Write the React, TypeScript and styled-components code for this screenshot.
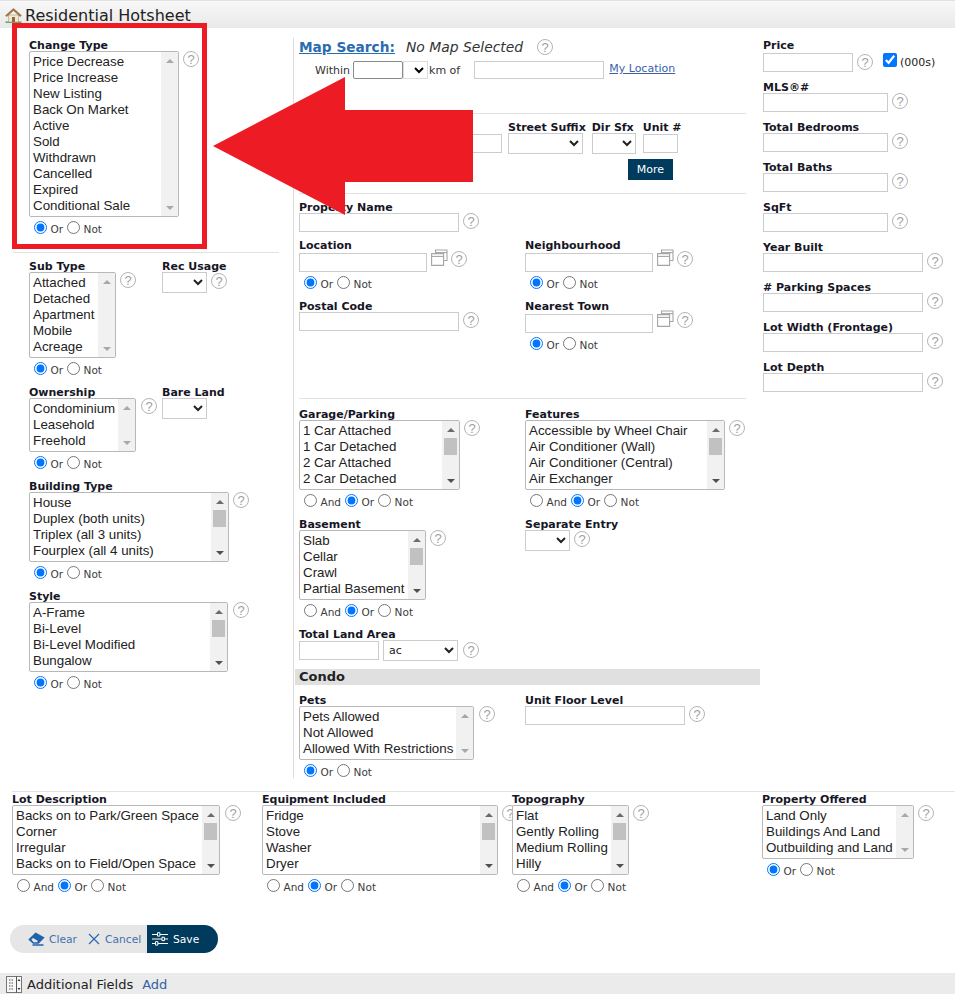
import React, { useId } from 'react';
import styled, { createGlobalStyle } from 'styled-components';

const GlobalStyle = createGlobalStyle`
  html, body {
    margin: 0;
    padding: 0;
    background: #fff;
  }
`;

const QUESTION = '?';

const HelpIcon = ({ top = 0, left = 4 }: { top?: number; left?: number }) => (
  <Help $top={top} $left={left}>{QUESTION}</Help>
);

const HouseIcon = () => (
  <svg width="17" height="15" viewBox="0 0 17 15">
    <path d="M0.5 14.2h16" stroke="#6ea35c" strokeWidth="1.6" />
    <path d="M3.5 7h10v7h-10z" fill="#f1e8d2" stroke="#a89a78" strokeWidth="0.6" />
    <path d="M7 9h3v5H7z" fill="#8c6a45" />
    <path d="M0.6 7.6 8.5 0.4l7.9 7.2-1.2 0.9-6.7-5.9L1.8 8.5z" fill="#a8743f" stroke="#7c5227" strokeWidth="0.5" />
  </svg>
);

const StackIcon = () => (
  <StackWrap>
    <svg width="17" height="17" viewBox="0 0 17 17" fill="#fff" stroke="#a5a5a5" strokeWidth="1.1">
      <path d="M4.5 1h11.5v10.5h-11.5z" />
      <path d="M4.5 3.6h11.5" />
      <path d="M0.6 4.6h12v11.8h-12z" />
      <path d="M0.6 7.4h12" />
    </svg>
  </StackWrap>
);

const EraserIcon = () => (
  <svg width="17" height="14" viewBox="0 0 17 14">
    <path d="M0.3 7.4 7.6 0.4l9 5-6 6.4H5z" fill="#1f63ad" />
    <path d="M3.4 7.4 5 6l5 3-1 1.3H5.6z" fill="#e6e6e6" />
    <path d="M4.5 13h11" stroke="#1f63ad" strokeWidth="1.5" />
  </svg>
);

const CrossIcon = () => (
  <svg width="12" height="12" viewBox="0 0 12 12" stroke="#2a69b0" strokeWidth="1.2">
    <path d="M1 1l10 10M11 1 1 11" />
  </svg>
);

const SlidersIcon = () => (
  <svg width="16" height="14" viewBox="0 0 16 14" fill="#003a5c" stroke="#fff" strokeWidth="1">
    <path d="M0 2.5h16M0 7h16M0 11.5h16" />
    <path d="M5.5 0.7h2.4v3.4H5.5zM10 5.2h2.4v3.4H10zM3.5 9.7h2.4v3.4H3.5z" />
  </svg>
);

const FieldsIcon = () => (
  <svg width="16" height="17" viewBox="0 0 16 17" fill="none" stroke="#555" strokeWidth="1">
    <rect x="0.5" y="0.5" width="15" height="16" fill="#f7f7f7" stroke="#777" />
    <path d="M3 4h5M3 7h5M3 10h5M3 13h5" strokeDasharray="1.5 1" />
    <path d="M10.5 0.5v16" />
    <path d="M11.5 5 13 3l1.5 2zM11.5 12 13 14l1.5-2z" fill="#333" stroke="none" />
  </svg>
);

type ListBoxProps = {
  items: string[];
  width: number;
  thumb?: boolean;
};

const ListBox = ({ items, width, thumb = false }: ListBoxProps) => (
  <ListFrame $w={width}>
    <ListItems>
      {items.map((item) => (
        <ListItem key={item}>{item}</ListItem>
      ))}
    </ListItems>
    <ScrollBar>
      <ArrowCell>
        <ArrowUp $active={thumb} />
      </ArrowCell>
      {thumb && <Thumb />}
      <ScrollSpacer />
      <ArrowCell>
        <ArrowDown $active={thumb} />
      </ArrowCell>
    </ScrollBar>
  </ListFrame>
);

const Modes = ({ and = false }: { and?: boolean }) => {
  const name = useId();
  return (
    <RadioRow>
      {and && (
        <RadioOption>
          <Radio type="radio" name={name} />
          And
        </RadioOption>
      )}
      <RadioOption>
        <Radio type="radio" name={name} defaultChecked />
        Or
      </RadioOption>
      <RadioOption>
        <Radio type="radio" name={name} />
        Not
      </RadioOption>
    </RadioRow>
  );
};

const RightField = ({ label, width }: { label: string; width: number }) => (
  <RightItem>
    <Label>{label}</Label>
    <Control>
      <TextInput $w={width} />
      <HelpIcon />
    </Control>
  </RightItem>
);

const App = () => {
  return (
    <Page>
      <GlobalStyle />
      <Header>
        <HouseIcon />
        <Title>Residential Hotsheet</Title>
      </Header>

      <Columns>
        <LeftColumn>
          <Field>
            <Label>Change Type</Label>
            <Control>
              <ListBox
                width={150}
                items={[
                  'Price Decrease',
                  'Price Increase',
                  'New Listing',
                  'Back On Market',
                  'Active',
                  'Sold',
                  'Withdrawn',
                  'Cancelled',
                  'Expired',
                  'Conditional Sale',
                ]}
              />
              <HelpIcon />
            </Control>
            <Modes />
          </Field>
          <LeftDivider />
          <SplitRow>
            <Field>
              <Label>Sub Type</Label>
              <Control>
                <ListBox width={87} items={['Attached', 'Detached', 'Apartment', 'Mobile', 'Acreage']} />
                <HelpIcon />
              </Control>
              <Modes />
            </Field>
            <Field>
              <Label>Rec Usage</Label>
              <Control>
                <Select $w={45} />
                <HelpIcon top={1} />
              </Control>
            </Field>
          </SplitRow>
          <SplitRow>
            <Field>
              <Label>Ownership</Label>
              <Control>
                <ListBox width={107} items={['Condominium', 'Leasehold', 'Freehold']} />
                <HelpIcon left={5} />
              </Control>
              <Modes />
            </Field>
            <Field>
              <Label>Bare Land</Label>
              <Control>
                <Select $w={45} />
              </Control>
            </Field>
          </SplitRow>
          <Field>
            <Label>Building Type</Label>
            <Control>
              <ListBox
                width={200}
                thumb
                items={['House', 'Duplex (both units)', 'Triplex (all 3 units)', 'Fourplex (all 4 units)']}
              />
              <HelpIcon />
            </Control>
            <Modes />
          </Field>
          <Field>
            <Label>Style</Label>
            <Control>
              <ListBox width={199} thumb items={['A-Frame', 'Bi-Level', 'Bi-Level Modified', 'Bungalow']} />
              <HelpIcon left={5} />
            </Control>
            <Modes />
          </Field>
        </LeftColumn>

        <MiddleColumn>
          <MapRow>
            <MapLink href="#">Map Search:</MapLink>
            <MapState>No Map Selected</MapState>
            <HelpIcon left={14} />
          </MapRow>
          <WithinRow>
            <PlainText>Within</PlainText>
            <WithinInput />
            <WithinSelect />
            <PlainText>km of</PlainText>
            <WithinPlace />
            <SmallLink href="#">My Location</SmallLink>
          </WithinRow>
          <MiddleDivider $top={34} />
          <AddressRow>
            <div>
              <Label>Street #</Label>
              <TextInput $w={60} $top={1} />
            </div>
            <div>
              <Label>Street Name</Label>
              <TextInput $w={137} $top={1} />
            </div>
            <div>
              <Label>Street Suffix</Label>
              <Select $w={75} />
            </div>
            <div>
              <Label>Dir Sfx</Label>
              <Select $w={44} />
            </div>
            <div>
              <Label>Unit #</Label>
              <TextInput $w={35} $top={1} />
            </div>
          </AddressRow>
          <MoreRow>
            <MoreButton type="button">More</MoreButton>
          </MoreRow>
          <MiddleDivider $top={13} />

          <PropertyField>
            <Label>Property Name</Label>
            <Control>
              <TextInput $w={160} />
              <HelpIcon />
            </Control>
          </PropertyField>

          <TwoUp>
            <Field>
              <Label>Location</Label>
              <Control>
                <TextInput $w={128} $top={2} />
                <StackIcon />
                <HelpIcon top={0} left={3} />
              </Control>
              <Modes />
            </Field>
            <Field>
              <Label>Neighbourhood</Label>
              <Control>
                <TextInput $w={128} $top={2} />
                <StackIcon />
                <HelpIcon top={0} left={3} />
              </Control>
              <Modes />
            </Field>
            <Field>
              <Label>Postal Code</Label>
              <Control>
                <TextInput $w={160} />
                <HelpIcon />
              </Control>
            </Field>
            <Field>
              <Label>Nearest Town</Label>
              <Control>
                <TextInput $w={128} $top={2} />
                <StackIcon />
                <HelpIcon top={0} left={3} />
              </Control>
              <Modes />
            </Field>
          </TwoUp>

          <MiddleDivider $top={38} />

          <TwoUp $top={8}>
            <Field>
              <Label>Garage/Parking</Label>
              <Control>
                <ListBox width={161} thumb items={['1 Car Attached', '1 Car Detached', '2 Car Attached', '2 Car Detached']} />
                <HelpIcon />
              </Control>
              <Modes and />
            </Field>
            <Field>
              <Label>Features</Label>
              <Control>
                <ListBox
                  width={200}
                  thumb
                  items={['Accessible by Wheel Chair', 'Air Conditioner (Wall)', 'Air Conditioner (Central)', 'Air Exchanger']}
                />
                <HelpIcon />
              </Control>
              <Modes and />
            </Field>
            <Field>
              <Label>Basement</Label>
              <Control>
                <ListBox width={127} thumb items={['Slab', 'Cellar', 'Crawl', 'Partial Basement']} />
                <HelpIcon />
              </Control>
              <Modes and />
            </Field>
            <Field>
              <Label>Separate Entry</Label>
              <Control>
                <Select $w={45} />
                <HelpIcon top={1} />
              </Control>
            </Field>
          </TwoUp>

          <Label>Total Land Area</Label>
          <Control>
            <TextInput $w={80} $top={1} />
            <UnitSelect defaultValue="ac">
              <option value="ac">ac</option>
            </UnitSelect>
            <HelpIcon top={2} left={5} />
          </Control>

          <SectionBar>Condo</SectionBar>

          <TwoUp>
            <Field>
              <Label>Pets</Label>
              <Control>
                <ListBox width={175} items={['Pets Allowed', 'Not Allowed', 'Allowed With Restrictions']} />
                <HelpIcon left={5} />
              </Control>
              <Modes />
            </Field>
            <Field>
              <Label>Unit Floor Level</Label>
              <Control>
                <TextInput $w={160} />
                <HelpIcon />
              </Control>
            </Field>
          </TwoUp>
        </MiddleColumn>

        <RightColumn>
          <RightItem>
            <Label>Price</Label>
            <Control>
              <TextInput $w={90} $top={2} />
              <HelpIcon top={3} />
              <ThousandsCheck type="checkbox" defaultChecked />
              <ThousandsText>(000s)</ThousandsText>
            </Control>
          </RightItem>
          <RightField label="MLS®#" width={125} />
          <RightField label="Total Bedrooms" width={125} />
          <RightField label="Total Baths" width={125} />
          <RightField label="SqFt" width={125} />
          <RightField label="Year Built" width={160} />
          <RightField label="# Parking Spaces" width={160} />
          <RightField label="Lot Width (Frontage)" width={160} />
          <RightField label="Lot Depth" width={160} />
        </RightColumn>
      </Columns>

      <BottomRow>
        <Field>
          <Label>Lot Description</Label>
          <Control>
            <ListBox
              width={208}
              thumb
              items={['Backs on to Park/Green Space', 'Corner', 'Irregular', 'Backs on to Field/Open Space']}
            />
            <HelpIcon left={5} />
          </Control>
          <Modes and />
        </Field>
        <Field>
          <Label>Equipment Included</Label>
          <Control>
            <ListBox width={236} thumb items={['Fridge', 'Stove', 'Washer', 'Dryer']} />
            <HelpIcon />
          </Control>
          <Modes and />
        </Field>
        <Field>
          <Label>Topography</Label>
          <Control>
            <ListBox width={117} thumb items={['Flat', 'Gently Rolling', 'Medium Rolling', 'Hilly']} />
            <HelpIcon />
          </Control>
          <Modes and />
        </Field>
        <Field>
          <Label>Property Offered</Label>
          <Control>
            <ListBox width={152} items={['Land Only', 'Buildings And Land', 'Outbuilding and Land']} />
            <HelpIcon />
          </Control>
          <Modes />
        </Field>
      </BottomRow>

      <ActionPill>
        <ClearButton type="button">
          <EraserIcon />
          Clear
        </ClearButton>
        <CancelButton type="button">
          <CrossIcon />
          Cancel
        </CancelButton>
        <SaveButton type="button">
          <SlidersIcon />
          Save
        </SaveButton>
      </ActionPill>

      <Footer>
        <FieldsIcon />
        <FooterText>Additional Fields</FooterText>
        <FooterLink href="#">Add</FooterLink>
      </Footer>

      <RedFrame />
      <RedArrow width="262" height="140" viewBox="0 0 262 140">
        <path d="M0 69 132 0V33H260V105H132V138Z" fill="#ed1c24" />
      </RedArrow>
    </Page>
  );
};

const Page = styled.div`
  position: relative;
  width: 955px;
  height: 994px;
  overflow: hidden;
  background: #fff;
  color: #1a1a1a;
  font-family: 'DejaVu Sans', sans-serif;
`;

const Header = styled.div`
  display: flex;
  align-items: center;
  gap: 3px;
  box-sizing: border-box;
  height: 28px;
  padding: 2px 0 0 5px;
  border-top: 1px solid #e2e2e2;
  background: linear-gradient(#f8f8f8, #e9e9e9);
`;

const Title = styled.span`
  font-size: 16px;
  line-height: 20px;
  color: #222;
`;

const Columns = styled.div`
  display: grid;
  grid-template-columns: 293px 467px 195px;
  height: 763px;
`;

const LeftColumn = styled.div`
  padding: 10px 0 0 29px;
`;

const Field = styled.div`
  margin-bottom: 5px;
  min-width: 0;
`;

const Label = styled.div`
  box-sizing: border-box;
  height: 13px;
  padding-top: 1px;
  font-size: 11px;
  font-weight: 700;
  line-height: 13px;
  color: #161626;
  white-space: nowrap;
`;

const Control = styled.div`
  display: flex;
  align-items: flex-start;
`;

const Help = styled.span<{ $top: number; $left: number }>`
  display: inline-flex;
  flex: none;
  align-items: center;
  justify-content: center;
  box-sizing: border-box;
  width: 16px;
  height: 16px;
  margin: ${(p) => p.$top}px 0 0 ${(p) => p.$left}px;
  border: 1.5px solid #b4b4b4;
  border-radius: 50%;
  font-family: 'Liberation Sans', sans-serif;
  font-size: 13px;
  line-height: 1;
  color: #a0a0a0;
`;

const StackWrap = styled.span`
  display: inline-flex;
  flex: none;
  margin: -2px 0 0 4px;
`;

const ListFrame = styled.div<{ $w: number }>`
  position: relative;
  display: flex;
  flex: none;
  box-sizing: border-box;
  width: ${(p) => p.$w}px;
  border: 1px solid #b8b8b8;
  border-radius: 2px;
  background: #fff;
`;

const ListItems = styled.div`
  flex: 1;
  min-width: 0;
  padding: 2px 0 2px 3px;
`;

const ListItem = styled.div`
  font-family: 'Liberation Sans', sans-serif;
  font-size: 13.33px;
  line-height: 16px;
  color: #222;
  white-space: nowrap;
`;

const ScrollBar = styled.div`
  display: flex;
  flex: none;
  flex-direction: column;
  width: 17px;
  background: #f1f1f1;
`;

const ArrowCell = styled.div`
  display: flex;
  flex: none;
  align-items: center;
  justify-content: center;
  height: 17px;
`;

const ArrowUp = styled.span<{ $active: boolean }>`
  width: 0;
  height: 0;
  border-right: 4px solid transparent;
  border-bottom: 4px solid ${(p) => (p.$active ? '#6b6b6b' : '#a8a8a8')};
  border-left: 4px solid transparent;
`;

const ArrowDown = styled.span<{ $active: boolean }>`
  width: 0;
  height: 0;
  border-top: 4px solid ${(p) => (p.$active ? '#505050' : '#a8a8a8')};
  border-right: 4px solid transparent;
  border-left: 4px solid transparent;
`;

const Thumb = styled.div`
  flex: none;
  height: 17px;
  margin: 0 2px;
  background: #c1c1c1;
`;

const ScrollSpacer = styled.div`
  flex: 1;
`;

const RadioRow = styled.div`
  display: flex;
  align-items: center;
  gap: 4px;
  height: 22px;
  padding-left: 5px;
`;

const RadioOption = styled.label`
  display: flex;
  align-items: center;
  gap: 3.5px;
  padding-top: 2px;
  font-size: 10.5px;
  color: #3c3c3c;
`;

const Radio = styled.input`
  width: 13px;
  height: 13px;
  margin: -4px 0 0;
  accent-color: #0075ff;
`;

const TextInput = styled.input<{ $w: number; $top?: number }>`
  display: block;
  flex: none;
  box-sizing: border-box;
  width: ${(p) => p.$w}px;
  height: 19px;
  margin: ${(p) => p.$top ?? 0}px 0 0;
  padding: 0;
  border: 1px solid #ccc;
  background: #fff;
`;

const Select = styled.select<{ $w: number }>`
  display: block;
  flex: none;
  box-sizing: border-box;
  width: ${(p) => p.$w}px;
  height: 21px;
  padding: 0;
  border: 1px solid #ccc;
  border-radius: 0;
  background: #fff;
  font-family: 'DejaVu Sans', sans-serif;
  font-size: 11px;
  color: #222;
`;

const UnitSelect = styled(Select).attrs({ $w: 75 })`
  margin-left: 4px;
  padding-left: 1px;
`;

const SplitRow = styled.div`
  display: grid;
  grid-template-columns: 133px 1fr;
`;

const LeftDivider = styled.div`
  width: 266px;
  height: 1px;
  margin: 13px 0 6px -16px;
  background: #e2e2e2;
`;

const MiddleColumn = styled.div`
  box-sizing: border-box;
  height: 740px;
  margin-top: 10px;
  padding-left: 5px;
  border-left: 1px solid #dcdcdc;
`;

const MapRow = styled.div`
  display: flex;
  align-items: center;
  height: 18px;
`;

const MapLink = styled.a`
  font-size: 13.7px;
  font-weight: 700;
  color: #2b6cb0;
`;

const MapState = styled.span`
  margin-left: 11px;
  font-size: 13.9px;
  font-style: italic;
  color: #333;
`;

const WithinRow = styled.div`
  display: flex;
  align-items: center;
  height: 18px;
  margin-top: 5px;
  padding-left: 16px;
`;

const PlainText = styled.span`
  font-size: 11px;
  color: #333;
`;

const WithinInput = styled.input`
  box-sizing: border-box;
  width: 50px;
  height: 18px;
  margin-left: 3px;
  padding: 0;
  border: 1px solid #8a8a8a;
  border-radius: 2px;
`;

const WithinSelect = styled.select`
  box-sizing: border-box;
  width: 25px;
  height: 18px;
  margin-right: 1px;
  padding: 0;
  border: 1px solid #ddd;
  border-radius: 0;
  background: #fff;
`;

const WithinPlace = styled.input`
  box-sizing: border-box;
  width: 130px;
  height: 18px;
  margin-left: 14px;
  padding: 0;
  border: 1px solid #ccc;
`;

const SmallLink = styled.a`
  margin: -3px 0 0 5px;
  font-size: 11px;
  color: #3b62a8;
`;

const MiddleDivider = styled.div<{ $top: number }>`
  width: 447px;
  height: 1px;
  margin-top: ${(p) => p.$top}px;
  background: #e2e2e2;
`;

const AddressRow = styled.div`
  display: flex;
  gap: 6px;
  margin-top: 6px;
  & > div:nth-child(5) {
    margin-left: 1px;
  }
`;

const MoreRow = styled.div`
  display: flex;
  justify-content: flex-end;
  width: 374px;
  margin-top: 5px;
`;

const MoreButton = styled.button`
  width: 45px;
  height: 21px;
  padding: 0;
  border: 0;
  background: #003a5c;
  font-family: 'DejaVu Sans', sans-serif;
  font-size: 11px;
  color: #fff;
`;

const PropertyField = styled.div`
  margin: 6px 0;
`;

const TwoUp = styled.div<{ $top?: number }>`
  display: grid;
  grid-template-columns: 226px 226px;
  margin-top: ${(p) => p.$top ?? 0}px;
`;

const SectionBar = styled.div`
  height: 16px;
  margin: 8px 0 8px -4px;
  padding-left: 4px;
  background: #e0e0e0;
  font-size: 13px;
  font-weight: 700;
  line-height: 16px;
  color: #222;
`;

const RightColumn = styled.div`
  padding: 10px 0 0 3px;
`;

const RightItem = styled.div`
  margin-bottom: 8px;
`;

const ThousandsCheck = styled.input`
  width: 14px;
  height: 14px;
  margin: 2px 0 0 10px;
  accent-color: #0075ff;
`;

const ThousandsText = styled.span`
  margin: 5px 0 0 3px;
  font-size: 11px;
  color: #222;
`;

const BottomRow = styled.div`
  display: grid;
  grid-template-columns: repeat(4, 250px);
  margin-left: 12px;
  border-top: 1px solid #e2e2e2;
`;

const ActionPill = styled.div`
  display: flex;
  width: 208px;
  height: 28px;
  margin: 23px 0 0 10px;
  overflow: hidden;
  border-radius: 14px;
  background: #e6e6e6;
`;

const PillButton = styled.button`
  display: flex;
  align-items: center;
  box-sizing: border-box;
  height: 28px;
  padding: 0;
  border: 0;
  background: transparent;
  font-family: 'DejaVu Sans', sans-serif;
  font-size: 10.7px;
  color: #4272ad;
`;

const ClearButton = styled(PillButton)`
  gap: 4px;
  width: 73px;
  padding-left: 18px;
`;

const CancelButton = styled(PillButton)`
  gap: 5px;
  width: 64px;
  padding-left: 5px;
`;

const SaveButton = styled(PillButton)`
  gap: 5px;
  width: 71px;
  padding-left: 5px;
  background: #003a5c;
  color: #fff;
`;

const Footer = styled.div`
  position: absolute;
  right: 0;
  bottom: 0;
  left: 0;
  display: flex;
  align-items: center;
  box-sizing: border-box;
  height: 21px;
  padding: 1px 0 0 6px;
  background: #ebebeb;
`;

const FooterText = styled.span`
  margin-left: 5px;
  font-size: 13px;
  color: #222;
`;

const FooterLink = styled.a`
  margin-left: 9px;
  font-size: 13px;
  color: #3362a8;
  text-decoration: none;
`;

const RedFrame = styled.div`
  position: absolute;
  top: 23px;
  left: 12px;
  box-sizing: border-box;
  width: 195px;
  height: 226px;
  border: 5px solid #ed1c24;
`;

const RedArrow = styled.svg`
  position: absolute;
  top: 77px;
  left: 213px;
`;

export default App;
